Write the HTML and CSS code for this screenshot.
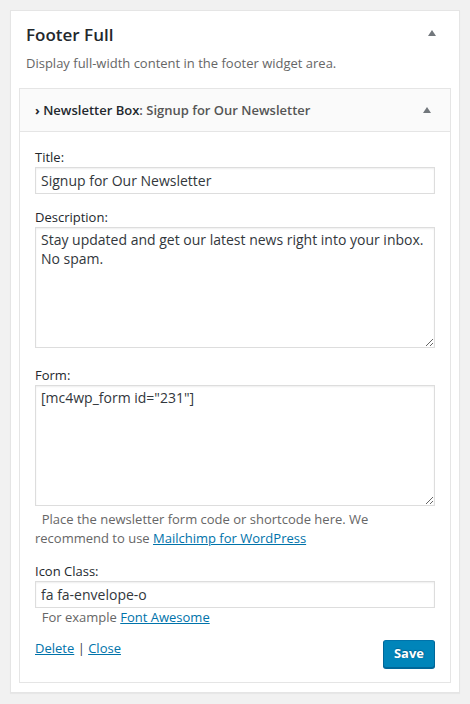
FILE: index.html
```html
<!DOCTYPE html>
<html lang="en">
<head>
    <meta charset="UTF-8">
    <meta name="viewport" content="width=device-width, initial-scale=1.0">
    <title>Widgets - Footer Full</title>
    <link rel="stylesheet" href="styles.css">
</head>
<body>
    <div class="sidebar">
        <div class="sidebar-name">
            <h2>Footer Full</h2>
            <span class="toggle-arrow"></span>
        </div>
        <p class="sidebar-description">Display full-width content in the footer widget area.</p>

        <div class="widget">
            <div class="widget-top">
                <h3><span class="chev">&rsaquo;</span> Newsletter Box<span class="in-widget-title">: Signup for Our Newsletter</span></h3>
                <span class="toggle-arrow"></span>
            </div>

            <form class="widget-inside">
                <label for="nl-title">Title:</label>
                <input type="text" id="nl-title" class="widefat" value="Signup for Our Newsletter">

                <label for="nl-desc" class="spaced">Description:</label>
                <textarea id="nl-desc" class="widefat">Stay updated and get our latest news right into your inbox. No spam.</textarea>

                <label for="nl-form" class="spaced after-area">Form:</label>
                <textarea id="nl-form" class="widefat">[mc4wp_form id="231"]</textarea>
                <p class="description">&nbsp; Place the newsletter form code or shortcode here. We recommend to use <a href="#">Mailchimp for WordPress</a></p>

                <label for="nl-icon" class="spaced">Icon Class:</label>
                <input type="text" id="nl-icon" class="widefat" value="fa fa-envelope-o">
                <p class="description hint">&nbsp; For example <a href="#">Font Awesome</a></p>

                <div class="widget-control-actions">
                    <div class="alignleft">
                        <a href="#">Delete</a> | <a href="#">Close</a>
                    </div>
                    <button type="submit" class="button-primary">Save</button>
                </div>
            </form>
        </div>
    </div>
</body>
</html>
```

FILE: styles.css
```css
body {
    margin: 0;
    padding: 10px;
    background-color: #f1f1f1;
    font-family: 'Open Sans', sans-serif;
    font-size: 13px;
    line-height: 18px;
    color: #444;
}
.sidebar {
    width: 448px;
    background-color: #fff;
    border: 1px solid #e5e5e5;
    box-shadow: 0 1px 1px rgba(0,0,0,0.04);
    padding-bottom: 9px;
}
.sidebar-name {
    display: flex;
    justify-content: space-between;
    align-items: center;
    padding: 12px 23px 0 15px;
}
.sidebar-name h2 {
    margin: 0;
    font-size: 17px;
    line-height: 24px;
    font-weight: 600;
    color: #23282d;
}
.sidebar-name .toggle-arrow {
    margin-top: -5px;
}
.toggle-arrow {
    width: 0;
    height: 0;
    border-left: 4px solid transparent;
    border-right: 4px solid transparent;
    border-bottom: 6px solid #72777c;
}
.sidebar-description {
    margin: 7px 0 16px;
    padding: 0 15px;
    color: #666;
}
.widget {
    margin: 0 8px;
    border: 1px solid #e5e5e5;
    background-color: #fff;
}
.widget-top {
    display: flex;
    justify-content: space-between;
    align-items: center;
    height: 42px;
    padding: 0 19px 0 15px;
    background-color: #fafafa;
    border-bottom: 1px solid #e5e5e5;
}
.widget-top h3 {
    margin: 0;
    font-size: 13px;
    font-weight: 600;
    color: #23282d;
}
.chev {
    font-weight: 700;
}
.in-widget-title {
    color: #555;
}
.widget-inside {
    display: flex;
    flex-direction: column;
    padding: 16px 15px 14px;
}
label {
    display: block;
    margin-bottom: 1px;
    color: #23282d;
}
label.spaced {
    margin-top: 14px;
}
label.after-area {
    margin-top: 18px;
}
.widefat {
    box-sizing: border-box;
    width: 100%;
    margin: 0;
    font-family: 'Open Sans', sans-serif;
    font-size: 14px;
    color: #32373c;
    border: 1px solid #ddd;
    box-shadow: inset 0 1px 2px rgba(0,0,0,0.07);
    background-color: #fff;
    outline: none;
}
input.widefat {
    height: 27px;
    padding: 2px 5px;
}
textarea.widefat {
    height: 121px;
    padding: 2px 5px;
    line-height: 19px;
    resize: vertical;
}
.description {
    margin: 4px 0 0;
    line-height: 19px;
    color: #666;
}
.description.hint {
    margin-top: 0;
}
a {
    color: #0073aa;
}
.widget-control-actions {
    display: flex;
    justify-content: space-between;
    align-items: flex-start;
    margin-top: 12px;
}
.button-primary {
    height: 28px;
    margin-top: 1px;
    padding: 0 10px 2px;
    font-family: 'Open Sans', sans-serif;
    font-size: 13px;
    font-weight: 700;
    color: #fff;
    background-color: #0085ba;
    border: 1px solid #0073aa;
    border-color: #0073aa #006799 #006799;
    border-radius: 3px;
    box-shadow: 0 1px 0 #006799;
    text-shadow: 0 -1px 1px #006799, 1px 0 1px #006799;
    cursor: pointer;
}
```
